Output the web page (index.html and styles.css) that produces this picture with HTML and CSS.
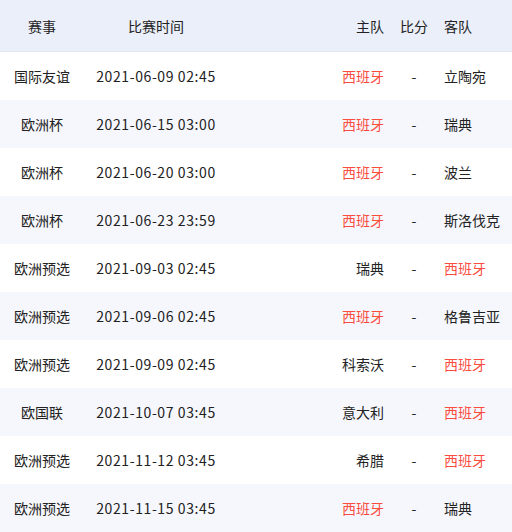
FILE: index.html
```html
<!DOCTYPE html>
<html lang="zh-CN">
<head>
<meta charset="utf-8">
<link rel="stylesheet" href="styles.css">
</head>
<body>
<div class="table">
  <div class="row head">
    <div class="c1">赛事</div><div class="c2">比赛时间</div><div class="c3">主队</div><div class="c4">比分</div><div class="c5">客队</div>
  </div>
  <div class="row"><div class="c1">国际友谊</div><div class="c2 time">2021-06-09 02:45</div><div class="c3 red">西班牙</div><div class="c4">-</div><div class="c5">立陶宛</div></div>
  <div class="row"><div class="c1">欧洲杯</div><div class="c2 time">2021-06-15 03:00</div><div class="c3 red">西班牙</div><div class="c4">-</div><div class="c5">瑞典</div></div>
  <div class="row"><div class="c1">欧洲杯</div><div class="c2 time">2021-06-20 03:00</div><div class="c3 red">西班牙</div><div class="c4">-</div><div class="c5">波兰</div></div>
  <div class="row"><div class="c1">欧洲杯</div><div class="c2 time">2021-06-23 23:59</div><div class="c3 red">西班牙</div><div class="c4">-</div><div class="c5">斯洛伐克</div></div>
  <div class="row"><div class="c1">欧洲预选</div><div class="c2 time">2021-09-03 02:45</div><div class="c3">瑞典</div><div class="c4">-</div><div class="c5 red">西班牙</div></div>
  <div class="row"><div class="c1">欧洲预选</div><div class="c2 time">2021-09-06 02:45</div><div class="c3 red">西班牙</div><div class="c4">-</div><div class="c5">格鲁吉亚</div></div>
  <div class="row"><div class="c1">欧洲预选</div><div class="c2 time">2021-09-09 02:45</div><div class="c3">科索沃</div><div class="c4">-</div><div class="c5 red">西班牙</div></div>
  <div class="row"><div class="c1">欧国联</div><div class="c2 time">2021-10-07 03:45</div><div class="c3">意大利</div><div class="c4">-</div><div class="c5 red">西班牙</div></div>
  <div class="row"><div class="c1">欧洲预选</div><div class="c2 time">2021-11-12 03:45</div><div class="c3">希腊</div><div class="c4">-</div><div class="c5 red">西班牙</div></div>
  <div class="row"><div class="c1">欧洲预选</div><div class="c2 time">2021-11-15 03:45</div><div class="c3 red">西班牙</div><div class="c4">-</div><div class="c5">瑞典</div></div>
</div>
</body>
</html>
```
FILE: styles.css
```css
html, body {
  margin: 0;
  padding: 0;
  background: #fff;
}
body {
  font-family: "Noto Sans CJK SC", "Noto Sans", sans-serif;
  font-size: 14px;
  color: #222;
}
.table {
  width: 512px;
}
.row {
  display: grid;
  grid-template-columns: 84px 144px 164px 44px 76px;
  height: 48px;
  align-items: center;
  background: #fff;
}
.row:nth-child(odd) {
  background: #f6f7fc;
}
.row.head {
  height: 51px;
  background: #eaeff9;
  border-bottom: 1px solid #e1e6f1;
}
.c1, .c2, .c4 {
  text-align: center;
}
.time {
  letter-spacing: 0.6px;
}
.c4 {
  padding: 0 8px;
}
.c3 {
  text-align: right;
  padding-right: 8px;
}
.c5 {
  text-align: left;
  padding-left: 8px;
}
.red {
  color: #fa4d3f;
}
```
